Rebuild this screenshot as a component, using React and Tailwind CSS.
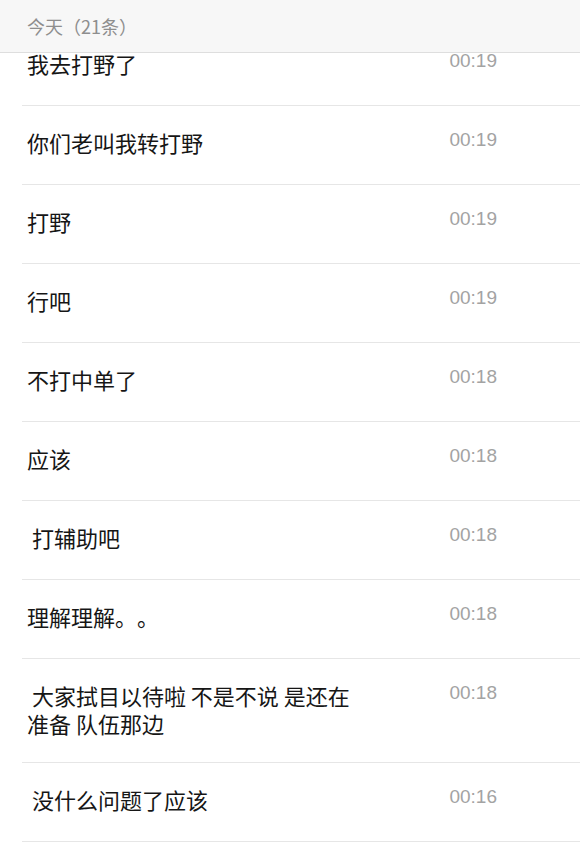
import React from "react";

const rows = [
  { t: "我去打野了", time: "00:19" },
  { t: "你们老叫我转打野", time: "00:19" },
  { t: "打野", time: "00:19" },
  { t: "行吧", time: "00:19" },
  { t: "不打中单了", time: "00:18" },
  { t: "应该", time: "00:18" },
  { t: " 打辅助吧", time: "00:18" },
  { t: "理解理解。。", time: "00:18" },
  { t: " 大家拭目以待啦 不是不说 是还在 准备 队伍那边", time: "00:18", multi: true },
  { t: " 没什么问题了应该", time: "00:16" },
];

export default function App() {
  return (
    <div
      className="w-[580px] h-[852px] overflow-hidden bg-white [text-spacing-trim:space-all]"
      style={{ fontFamily: '"Noto Sans CJK SC", "Noto Sans", sans-serif' }}
    >
      <div className="sticky top-0 z-10 h-[53px] bg-[#f7f7f7] border-b border-[#dedede] pl-[27px] flex items-center">
        <span className="text-[18px] text-[#8e8e8e] leading-none -mt-[1px]">今天（21条）</span>
      </div>
      <div className="-mt-[26px] ml-[22px]">
        {rows.map((r, i) => (
          <div
            key={i}
            className={
              r.multi
                ? "flex items-start justify-between border-b border-[#e6e6e6] pl-[5px] pr-[83px] pt-[22px] pb-[25px]"
                : "flex items-start justify-between border-b border-[#e6e6e6] pl-[5px] pr-[83px] pt-[22px] pb-[28px]"
            }
          >
            <div className="max-w-[345px] whitespace-pre-wrap text-[22px] leading-[28px] text-[#161616]">
              {r.t}
            </div>
            <div
              className="text-[19px] leading-[24px] text-[#a3a3a3]"
              style={{ fontFamily: '"Liberation Sans", Arial, sans-serif' }}
            >
              {r.time}
            </div>
          </div>
        ))}
      </div>
    </div>
  );
}
